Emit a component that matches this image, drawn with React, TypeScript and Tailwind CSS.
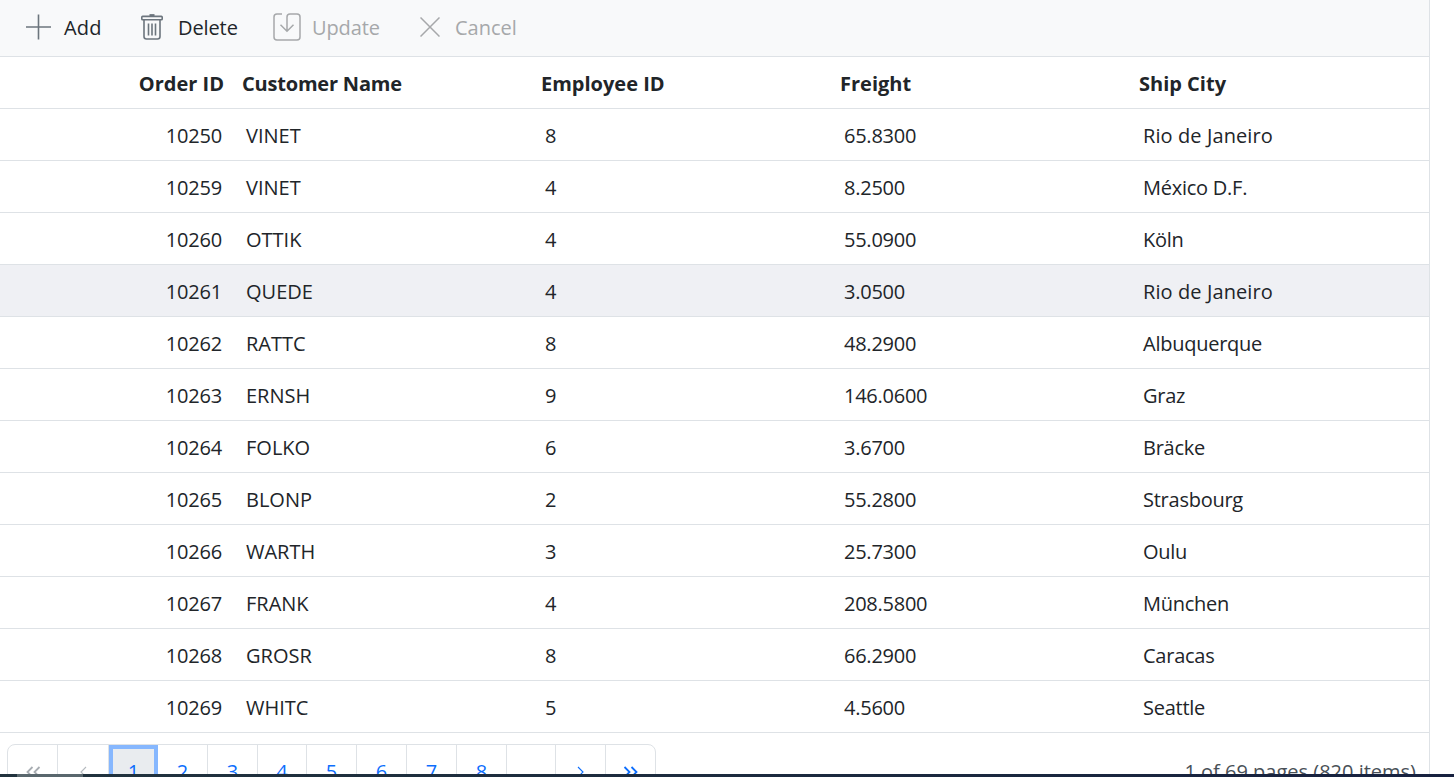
import React from "react";

const orders: string[][] = [
  ["10250", "VINET", "8", "65.8300", "Rio de Janeiro"],
  ["10259", "VINET", "4", "8.2500", "México D.F."],
  ["10260", "OTTIK", "4", "55.0900", "Köln"],
  ["10261", "QUEDE", "4", "3.0500", "Rio de Janeiro"],
  ["10262", "RATTC", "8", "48.2900", "Albuquerque"],
  ["10263", "ERNSH", "9", "146.0600", "Graz"],
  ["10264", "FOLKO", "6", "3.6700", "Bräcke"],
  ["10265", "BLONP", "2", "55.2800", "Strasbourg"],
  ["10266", "WARTH", "3", "25.7300", "Oulu"],
  ["10267", "FRANK", "4", "208.5800", "München"],
  ["10268", "GROSR", "8", "66.2900", "Caracas"],
  ["10269", "WHITC", "5", "4.5600", "Seattle"],
];

const columns = "grid grid-cols-[222px_299px_299px_299px_1fr]";

function Toolbar() {
  return (
    <div className="flex h-[57px] shrink-0 items-center border-b border-[#dee2e6] bg-[#f8f9fa] pb-[3px] text-[#212529]">
      <button className="flex w-[115px] items-center pl-[26px]">
        <svg className="h-[26px] w-[26px] shrink-0 text-[#6c757d]" viewBox="0 0 26 26" fill="none" stroke="currentColor" strokeWidth="1.6">
          <path d="M12.500 .5v25M0 13h25" />
        </svg>
        <span className="ml-3 pt-0.5 tracking-[0.2px]">Add</span>
      </button>
      <button className="flex w-[135px] items-center pl-[26px]">
        <svg className="h-[26px] w-[22px] shrink-0 text-[#6c757d]" viewBox="0 0 22 26" fill="none" stroke="currentColor" strokeWidth="1.600" strokeLinejoin="round">
          <path d="M8.500 1.200h5" strokeWidth="2.200" />
          <path d="M1.600 2.400h18.800q.8 0 .8.800v1.800q0 .8-.8.800H1.600q-.8 0-.8-.8V3.200q0-.8.8-.8zM3 6v16.500Q3 25 5.500 25h11Q19 25 19 22.500V6" />
          <path d="M7.500 9.500v12M11 9.500v12M14.500 9.500v12" />
        </svg>
        <span className="ml-[15px] pt-0.5 tracking-[-0.1px]">Delete</span>
      </button>
      <button className="flex w-[144px] items-center pl-[23px] text-[#a6a8aa]">
        <svg className="h-7 w-7 shrink-0" viewBox="0 0 28 28" fill="none" stroke="currentColor" strokeWidth="1.500">
          <path d="M9 1H4Q1 1 1 4v20q0 3 3 3h20q3 0 3-3V4q0-3-3-3h-7q-3 0-3 3v14M7.500 11.800l6.500 6.500 6.500-6.500" />
        </svg>
        <span className="ml-[11px] pt-0.5 tracking-[-0.1px]">Update</span>
      </button>
      <button className="flex items-center pl-[26px] text-[#a6a8aa]">
        <svg className="h-5 w-5 shrink-0" viewBox="0 0 20 20" fill="none" stroke="currentColor" strokeWidth="1.500">
          <path d="M.5.5l19 19M19.500.5l-19 19" />
        </svg>
        <span className="ml-[15px] pt-0.5">Cancel</span>
      </button>
    </div>
  );
}

function Chevrons({ left = false, double = false }: { left?: boolean; double?: boolean }) {
  return (
    <svg className={left ? "h-3 w-4 rotate-180" : "h-3 w-4"} viewBox="0 0 16 12" fill="none" stroke="currentColor" strokeWidth={double ? 1.8 : 1.1}>
      <path d={double ? "M1.500 1l5 5-5 5M8.500 1l5 5-5 5" : "M5 1l5 5-5 5"} />
    </svg>
  );
}

function Pager() {
  const cell = "flex h-[54px] items-center justify-center border-r border-[#dee2e6]";
  return (
    <div className="flex items-start justify-between pt-[11px] pr-[13px] pl-[7px]">
      <div className="grid grid-cols-[50px_51px_49px_50px_50px_49px_50px_50px_50px_50px_49px_50px_49px] rounded-lg border border-[#dee2e6] text-[#0d6efd]">
        <div className={cell + " text-[#a8adb2]"}><Chevrons left double /></div>
        <div className={cell + " text-[#b5babf]"}><Chevrons left /></div>
        <div className="flex h-[54px] items-center justify-center border-4 border-[#86b7fe] bg-[#e9ecef]">1</div>
        {["2", "3", "4", "5", "6", "7", "8"].map((page) => (
          <div key={page} className={cell}>{page}</div>
        ))}
        <div className={cell} />
        <div className={cell}><Chevrons /></div>
        <div className="flex h-[54px] items-center justify-center"><Chevrons double /></div>
      </div>
      <span className="mt-[14px] text-[#495057]">1 of 69 pages (820 items)</span>
    </div>
  );
}

export default function App() {
  return (
    <div className="flex h-[777px] w-[1454px] flex-col overflow-hidden bg-white font-['Open_Sans',sans-serif] text-[20px] leading-[28px] text-[#212529]">
      <main className="flex min-h-0 w-[1430px] flex-1 flex-col overflow-hidden border-r border-[#dee2e6]">
        <Toolbar />
        <div className={columns + " h-[52px] shrink-0 items-center border-b border-[#dee2e6] pt-[3px] font-bold"}>
          <span className="-mr-[2px] text-right">Order ID</span>
          <span className="pl-5 tracking-[-0.2px]">Customer Name</span>
          <span className="pl-5">Employee ID</span>
          <span className="pl-5">Freight</span>
          <span className="pl-5">Ship City</span>
        </div>
        {orders.map((order) => (
          <div
            key={order[0]}
            className={columns + " h-[52px] shrink-0 items-center border-b border-[#dee2e6] pt-0.5 " + (order[0] === "10261" ? "bg-[#eff0f4]" : "bg-white")}
          >
            <span className="text-right tracking-[-0.2px]">{order[0]}</span>
            <span className="pl-6">{order[1]}</span>
            <span className="pl-6">{order[2]}</span>
            <span className="pl-6 tracking-[-0.25px]">{order[3]}</span>
            <span className={order[4] === "Rio de Janeiro" ? "pl-6 tracking-[0.1px]" : "pl-6 tracking-[-0.25px]"}>{order[4]}</span>
          </div>
        ))}
        <Pager />
      </main>
      <footer className="h-[3px] shrink-0 bg-gradient-to-r from-[#21333d] to-[#17213f] pl-[17px]">
        <div className="h-full w-[66px] bg-[#59676d]" />
      </footer>
    </div>
  );
}
